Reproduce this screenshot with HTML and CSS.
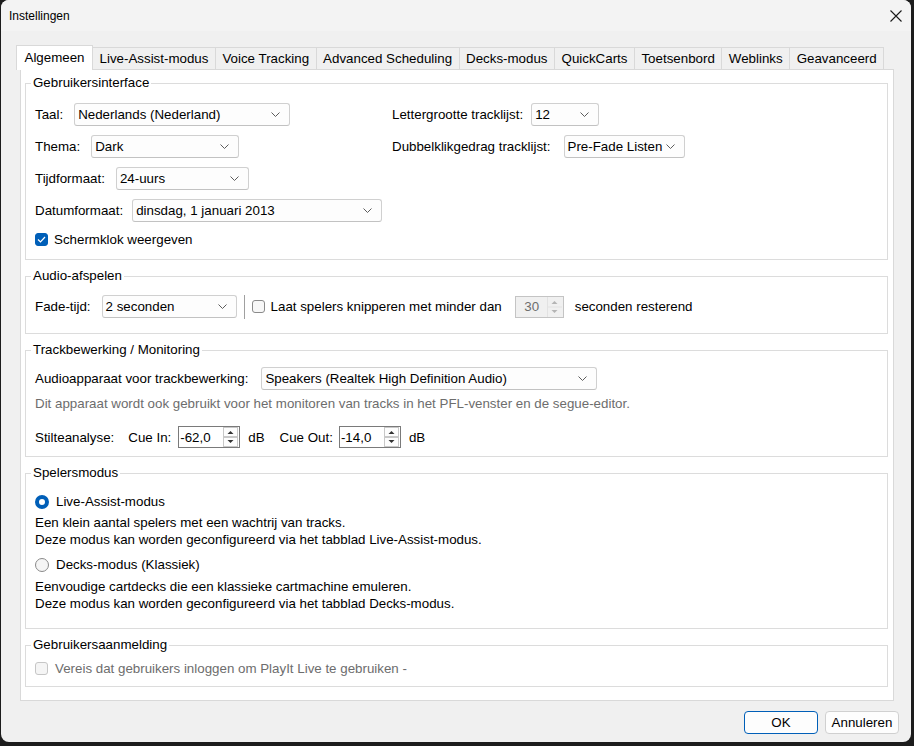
FILE: index.html
```html
<!DOCTYPE html>
<html lang="nl">
<head>
    <meta charset="UTF-8">
    <title>Instellingen</title>
    <link rel="stylesheet" href="styles.css">
</head>
<body>

<div class="window">
    <div class="titlebar">
        <span class="title">Instellingen</span>
        <svg class="close" width="12" height="12" viewBox="0 0 12 12">
            <path d="M0.5 0.5 L11.5 11.5 M11.5 0.5 L0.5 11.5" stroke="#1a1a1a" stroke-width="1.1" fill="none"/>
        </svg>
    </div>

    <div class="main">
        <div class="tabs">
            <div class="tab active">Algemeen</div>
            <div class="tab">Live-Assist-modus</div>
            <div class="tab">Voice Tracking</div>
            <div class="tab">Advanced Scheduling</div>
            <div class="tab">Decks-modus</div>
            <div class="tab">QuickCarts</div>
            <div class="tab">Toetsenbord</div>
            <div class="tab">Weblinks</div>
            <div class="tab">Geavanceerd</div>
        </div>

        <div class="pane">
            <!-- Gebruikersinterface -->
            <fieldset class="group">
                <legend>Gebruikersinterface</legend>
                <div class="group-body ui-body">
                    <div class="ui-cols">
                        <div class="col col-left">
                            <div class="row">
                                <span>Taal:</span>
                                <div class="combo combo-lang"><span>Nederlands (Nederland)</span><svg class="chev" width="9" height="5" viewBox="0 0 9 5"><path d="M0.5 0.5 L4.5 4.5 L8.5 0.5" stroke="#5c5c5c" fill="none"/></svg></div>
                            </div>
                            <div class="row">
                                <span>Thema:</span>
                                <div class="combo combo-theme"><span>Dark</span><svg class="chev" width="9" height="5" viewBox="0 0 9 5"><path d="M0.5 0.5 L4.5 4.5 L8.5 0.5" stroke="#5c5c5c" fill="none"/></svg></div>
                            </div>
                            <div class="row">
                                <span>Tijdformaat:</span>
                                <div class="combo combo-time"><span>24-uurs</span><svg class="chev" width="9" height="5" viewBox="0 0 9 5"><path d="M0.5 0.5 L4.5 4.5 L8.5 0.5" stroke="#5c5c5c" fill="none"/></svg></div>
                            </div>
                            <div class="row date-row">
                                <span>Datumformaat:</span>
                                <div class="combo combo-date"><span>dinsdag, 1 januari 2013</span><svg class="chev" width="9" height="5" viewBox="0 0 9 5"><path d="M0.5 0.5 L4.5 4.5 L8.5 0.5" stroke="#5c5c5c" fill="none"/></svg></div>
                            </div>
                            <label class="check-row clock-row">
                                <span class="checkbox checked"><svg width="9" height="7" viewBox="0 0 9 7"><path d="M1 3.5 L3.5 6 L8 1" stroke="#fff" stroke-width="1.2" fill="none"/></svg></span>
                                <span>Schermklok weergeven</span>
                            </label>
                        </div>
                        <div class="col">
                            <div class="row size-row">
                                <span>Lettergrootte tracklijst:</span>
                                <div class="combo combo-size"><span>12</span><svg class="chev" width="9" height="5" viewBox="0 0 9 5"><path d="M0.5 0.5 L4.5 4.5 L8.5 0.5" stroke="#5c5c5c" fill="none"/></svg></div>
                            </div>
                            <div class="row dbl-row">
                                <span>Dubbelklikgedrag tracklijst:</span>
                                <div class="combo combo-dbl"><span>Pre-Fade Listen</span><svg class="chev" width="9" height="5" viewBox="0 0 9 5"><path d="M0.5 0.5 L4.5 4.5 L8.5 0.5" stroke="#5c5c5c" fill="none"/></svg></div>
                            </div>
                        </div>
                    </div>
                </div>
            </fieldset>

            <!-- Audio-afspelen -->
            <fieldset class="group">
                <legend>Audio-afspelen</legend>
                <div class="group-body audio-body">
                    <div class="row">
                        <span>Fade-tijd:</span>
                        <div class="combo combo-fade"><span>2 seconden</span><svg class="chev" width="9" height="5" viewBox="0 0 9 5"><path d="M0.5 0.5 L4.5 4.5 L8.5 0.5" stroke="#5c5c5c" fill="none"/></svg></div>
                        <span class="vsep"></span>
                        <label class="check-row blink">
                            <span class="checkbox"></span>
                            <span>Laat spelers knipperen met minder dan</span>
                        </label>
                        <div class="spin spin-secs disabled">
                            <span class="spin-value">30</span>
                            <svg class="spin-btns" width="15" height="20" viewBox="0 0 15 20">
                                <path d="M4.5 7 L7.5 4 L10.5 7 Z" fill="#b4b4b4"/>
                                <path d="M4.5 13 L7.5 16 L10.5 13 Z" fill="#b4b4b4"/>
                                <path d="M0.5 0 V20 M0.5 10 H15" stroke="#e2e2e2" fill="none"/>
                            </svg>
                        </div>
                        <span class="after-spin">seconden resterend</span>
                    </div>
                </div>
            </fieldset>

            <!-- Trackbewerking / Monitoring -->
            <fieldset class="group">
                <legend>Trackbewerking / Monitoring</legend>
                <div class="group-body track-body">
                    <div class="row device-row">
                        <span>Audioapparaat voor trackbewerking:</span>
                        <div class="combo combo-device"><span>Speakers (Realtek High Definition Audio)</span><svg class="chev" width="9" height="5" viewBox="0 0 9 5"><path d="M0.5 0.5 L4.5 4.5 L8.5 0.5" stroke="#5c5c5c" fill="none"/></svg></div>
                    </div>
                    <p class="hint">Dit apparaat wordt ook gebruikt voor het monitoren van tracks in het PFL-venster en de segue-editor.</p>
                    <div class="row silence-row">
                        <span>Stilteanalyse:</span>
                        <span class="cue-label">Cue In:</span>
                        <div class="spin spin-cue">
                            <span class="spin-value">-62,0</span>
                            <svg class="spin-btns" width="15" height="20" viewBox="0 0 15 20">
                                <rect x="0.5" y="0.5" width="14" height="9" fill="#fdfdfd" stroke="#c8c8c8"/>
                                <rect x="0.5" y="10.5" width="14" height="9" fill="#fdfdfd" stroke="#c8c8c8"/>
                                <path d="M4.5 7 L7.5 4 L10.5 7 Z" fill="#333"/>
                                <path d="M4.5 13 L7.5 16 L10.5 13 Z" fill="#333"/>
                            </svg>
                        </div>
                        <span class="unit">dB</span>
                        <span class="cue-label cue-out">Cue Out:</span>
                        <div class="spin spin-cue">
                            <span class="spin-value">-14,0</span>
                            <svg class="spin-btns" width="15" height="20" viewBox="0 0 15 20">
                                <rect x="0.5" y="0.5" width="14" height="9" fill="#fdfdfd" stroke="#c8c8c8"/>
                                <rect x="0.5" y="10.5" width="14" height="9" fill="#fdfdfd" stroke="#c8c8c8"/>
                                <path d="M4.5 7 L7.5 4 L10.5 7 Z" fill="#333"/>
                                <path d="M4.5 13 L7.5 16 L10.5 13 Z" fill="#333"/>
                            </svg>
                        </div>
                        <span class="unit">dB</span>
                    </div>
                </div>
            </fieldset>

            <!-- Spelersmodus -->
            <fieldset class="group">
                <legend>Spelersmodus</legend>
                <div class="group-body mode-body">
                    <label class="check-row">
                        <span class="radio checked"></span>
                        <span>Live-Assist-modus</span>
                    </label>
                    <p class="mode-desc">Een klein aantal spelers met een wachtrij van tracks.<br>Deze modus kan worden geconfigureerd via het tabblad Live-Assist-modus.</p>
                    <label class="check-row mode-second">
                        <span class="radio"></span>
                        <span>Decks-modus (Klassiek)</span>
                    </label>
                    <p class="mode-desc mode-desc-second">Eenvoudige cartdecks die een klassieke cartmachine emuleren.<br>Deze modus kan worden geconfigureerd via het tabblad Decks-modus.</p>
                </div>
            </fieldset>

            <!-- Gebruikersaanmelding -->
            <fieldset class="group">
                <legend>Gebruikersaanmelding</legend>
                <div class="group-body login-body">
                    <label class="check-row disabled-row">
                        <span class="checkbox disabled"></span>
                        <span>Vereis dat gebruikers inloggen om PlayIt Live te gebruiken -</span>
                    </label>
                </div>
            </fieldset>
        </div>

        <div class="buttons">
            <button class="btn btn-default">OK</button>
            <button class="btn">Annuleren</button>
        </div>
    </div>
</div>

</body>
</html>
```

FILE: styles.css
```css
body {
    margin: 0;
    background-color: #1c1c1c;
    font-family: "Liberation Sans", Arial, sans-serif;
    font-size: 13.33px;
    color: #000;
}
.window {
    margin-left: 1px;
    width: 910px;
    height: 742px;
    background-color: #f0f0f0;
    border-radius: 8px;
    overflow: hidden;
    display: flex;
    flex-direction: column;
}
.titlebar {
    height: 31px;
    background-color: #f3f3f3;
    display: flex;
    align-items: center;
    justify-content: space-between;
    padding: 0 8px 0 8px;
    flex-shrink: 0;
}
.title {
    font-size: 12px;
}
.close {
    margin-right: 1px;
    margin-top: 1px;
}
.main {
    flex: 1;
    display: flex;
    flex-direction: column;
    padding-top: 14px;
}

/* Tabs */
.tabs {
    display: flex;
    align-items: flex-end;
    margin-left: 15px;
    height: 24px;
}
.tab {
    height: 22px;
    line-height: 22px;
    padding: 0 6.5px;
    background-color: #f0f0f0;
    border: 1px solid #d9d9d9;
    border-bottom: none;
    border-left: none;
    box-sizing: border-box;
    white-space: nowrap;
}
.tab.active {
    height: 25px;
    line-height: 24px;
    margin-bottom: -1px;
    padding: 0 7.5px;
    background-color: #fff;
    border-left: 1px solid #d9d9d9;
    position: relative;
    z-index: 1;
}
.pane {
    margin-left: 19px;
    width: 874px;
    height: 632px;
    box-sizing: border-box;
    background-color: #fff;
    border: 1px solid #d9d9d9;
    padding: 5px 5px 0 4px;
    display: flex;
    flex-direction: column;
    gap: 8px;
}

/* Group boxes */
.group {
    margin: 0;
    padding: 0;
    min-width: 0;
    border: 1px solid #dcdcdc;
}
.group legend {
    margin-left: 5px;
    padding: 0 2px;
    line-height: 16px;
}
.group-body {
    padding: 0 9px;
}
.ui-body {
    padding-top: 12px;
    padding-bottom: 11px;
}
.ui-cols {
    display: flex;
}
.col {
    display: flex;
    flex-direction: column;
    gap: 9px;
}
.col-left {
    width: 357px;
}
.row {
    display: flex;
    align-items: center;
    gap: 11px;
    height: 23px;
    white-space: nowrap;
}
.date-row {
    gap: 9px;
}
.size-row {
    gap: 8px;
}
.dbl-row {
    gap: 13px;
}
.check-row {
    display: flex;
    align-items: center;
    gap: 6px;
    height: 17px;
    white-space: nowrap;
}

/* Combo boxes */
.combo {
    height: 23px;
    box-sizing: border-box;
    border: 1px solid #d0d0d0;
    border-bottom-color: #c2c2c2;
    border-radius: 3px;
    background-color: #fdfdfd;
    display: flex;
    align-items: center;
    justify-content: space-between;
    padding: 0 9px 0 3px;
}
.combo-lang { width: 216px; }
.combo-theme { width: 148px; }
.combo-time { width: 133px; }
.combo-date { width: 250px; }
.combo-size { width: 68px; }
.combo-dbl { width: 121px; }
.combo-fade { width: 135px; }
.combo-device { width: 336px; }

/* Check boxes and radios */
.checkbox {
    width: 13px;
    height: 13px;
    box-sizing: border-box;
    border: 1px solid #8a8a8a;
    border-radius: 3px;
    background-color: #f7f7f7;
    display: flex;
    align-items: center;
    justify-content: center;
    flex-shrink: 0;
}
.checkbox.checked {
    background-color: #005fb8;
    border-color: #005fb8;
}
.checkbox.disabled {
    border-color: #c6c6c6;
    background-color: #f5f5f5;
}
.radio {
    width: 14px;
    height: 14px;
    box-sizing: border-box;
    border: 1px solid #8a8a8a;
    border-radius: 50%;
    background-color: #f5f5f5;
    flex-shrink: 0;
}
.radio.checked {
    border: 4px solid #005fb8;
    background-color: #fff;
}

/* Audio row */
.audio-body {
    padding-top: 11px;
    padding-bottom: 15px;
}
.audio-body .row {
    gap: 0;
}
.combo-fade {
    margin-left: 11px;
}
.vsep {
    width: 1px;
    height: 24px;
    background-color: #a0a0a0;
    margin: 0 7px;
}
.spin {
    height: 22px;
    box-sizing: border-box;
    border: 1px solid #7a7a7a;
    background-color: #fff;
    display: flex;
    align-items: center;
    justify-content: space-between;
    padding: 0 1px 0 1px;
}
.spin-secs {
    width: 49px;
    margin-left: 13px;
}
.spin-secs .spin-value {
    flex: 1;
    text-align: center;
}
.spin.disabled {
    border-color: #c4c4c4;
    background-color: #f0f0f0;
    color: #6d6d6d;
}
.after-spin {
    margin-left: 11px;
}

/* Track editing */
.track-body {
    padding-top: 9px;
    padding-bottom: 8px;
}
.device-row {
    gap: 13px;
}
.hint {
    margin: 6px 0 0;
    line-height: 16px;
    color: #6d6d6d;
    white-space: nowrap;
}
.silence-row {
    height: 22px;
    margin-top: 14px;
    gap: 0;
}
.cue-label {
    margin-left: 14px;
    margin-right: 7px;
}
.cue-label.cue-out {
    margin-left: 15px;
    margin-right: 6px;
}
.spin-cue {
    width: 62px;
}
.unit {
    margin-left: 8px;
}

/* Player mode */
.mode-body {
    padding-top: 12px;
    padding-bottom: 16px;
}
.mode-body .check-row {
    gap: 7px;
}
.mode-desc {
    margin: 4px 0 0;
    line-height: 17px;
    white-space: nowrap;
}
.mode-second {
    margin-top: 8px;
}
.mode-desc-second {
    margin-top: 5px;
}

/* Login */
.login-body {
    padding-top: 7px;
    padding-bottom: 9px;
}
.disabled-row {
    color: #6d6d6d;
    gap: 7px;
}

/* Dialog buttons */
.buttons {
    display: flex;
    justify-content: flex-end;
    gap: 7px;
    padding: 10px 12px 0 0;
}
.btn {
    width: 74px;
    height: 23px;
    font-family: inherit;
    font-size: 13.33px;
    color: #000;
    background-color: #fdfdfd;
    border: 1px solid #d0d0d0;
    border-radius: 4px;
    padding: 0;
}
.btn-default {
    border-color: #005fb8;
}
```
